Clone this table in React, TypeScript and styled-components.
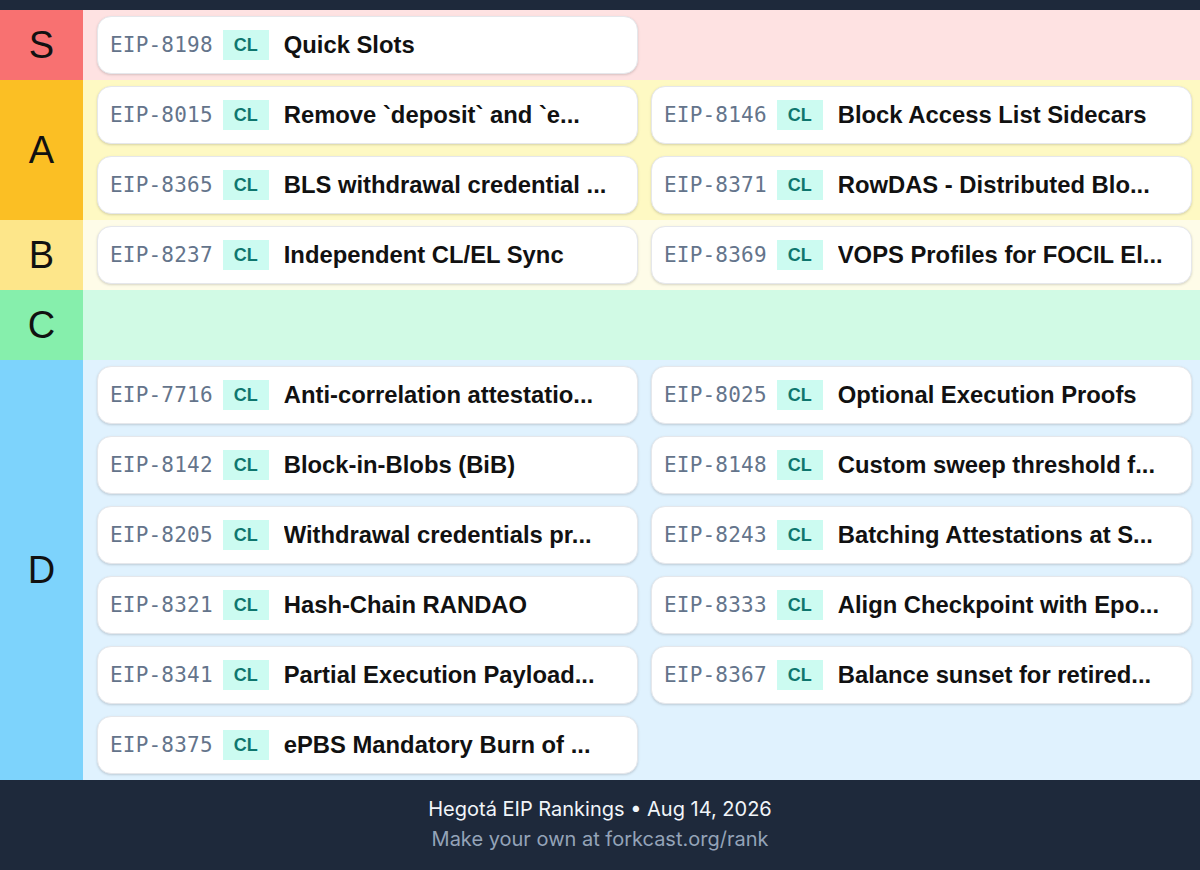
import React from "react";
import styled, { createGlobalStyle } from "styled-components";

const Global = createGlobalStyle`
  html, body { margin: 0; padding: 0; background: #1e293b; }
  body { font-family: Inter, "Liberation Sans", Arial, sans-serif; }
  * { box-sizing: border-box; }
`;

type Tier = { label: string; labelBg: string; rowBg: string; items: [string, string][] };

const tiers: Tier[] = [
  { label: "S", labelBg: "#f87171", rowBg: "#fee2e2", items: [["EIP-8198", "Quick Slots"]] },
  {
    label: "A", labelBg: "#fbbf24", rowBg: "#fef9c3",
    items: [
      ["EIP-8015", "Remove `deposit` and `e..."],
      ["EIP-8146", "Block Access List Sidecars"],
      ["EIP-8365", "BLS withdrawal credential ..."],
      ["EIP-8371", "RowDAS - Distributed Blo..."],
    ],
  },
  {
    label: "B", labelBg: "#fde68a", rowBg: "#fefce8",
    items: [
      ["EIP-8237", "Independent CL/EL Sync"],
      ["EIP-8369", "VOPS Profiles for FOCIL El..."],
    ],
  },
  { label: "C", labelBg: "#86efac", rowBg: "#d1fae5", items: [] },
  {
    label: "D", labelBg: "#7dd3fc", rowBg: "#e0f2fe",
    items: [
      ["EIP-7716", "Anti-correlation attestatio..."],
      ["EIP-8025", "Optional Execution Proofs"],
      ["EIP-8142", "Block-in-Blobs (BiB)"],
      ["EIP-8148", "Custom sweep threshold f..."],
      ["EIP-8205", "Withdrawal credentials pr..."],
      ["EIP-8243", "Batching Attestations at S..."],
      ["EIP-8321", "Hash-Chain RANDAO"],
      ["EIP-8333", "Align Checkpoint with Epo..."],
      ["EIP-8341", "Partial Execution Payload..."],
      ["EIP-8367", "Balance sunset for retired..."],
      ["EIP-8375", "ePBS Mandatory Burn of ..."],
    ],
  },
];

const Page = styled.div`
  width: 1200px;
  height: 870px;
  background: #1e293b;
  padding-top: 10px;
  display: flex;
  flex-direction: column;
`;

const Board = styled.div`
  display: flex;
  flex-direction: column;
`;

const Row = styled.div<{ $bg: string }>`
  display: flex;
  min-height: 70px;
  background: ${(p) => p.$bg};
`;

const Label = styled.div<{ $bg: string }>`
  width: 83px;
  flex: 0 0 83px;
  background: ${(p) => p.$bg};
  display: flex;
  align-items: center;
  justify-content: center;
  font-family: "Liberation Sans", Arial, sans-serif;
  font-size: 38px;
  font-weight: 400;
  color: #111;
`;

const Cards = styled.div`
  flex: 1;
  display: grid;
  grid-template-columns: 1fr 1fr;
  column-gap: 13px;
  row-gap: 12px;
  padding: 6px 8px 6px 14px;
  align-content: start;
`;

const Card = styled.div`
  height: 58px;
  background: #fff;
  border: 1px solid #e5e7eb;
  border-radius: 14px;
  box-shadow: 0 1px 3px rgba(0, 0, 0, 0.1), 0 1px 2px rgba(0, 0, 0, 0.06);
  display: flex;
  align-items: center;
  padding: 0 20px 0 12px;
  min-width: 0;
`;

const Num = styled.span`
  font-family: "DejaVu Sans Mono", "Liberation Mono", monospace;
  font-size: 21px;
  color: #64748b;
  letter-spacing: 0.2px;
  white-space: nowrap;
  flex: none;
`;

const Badge = styled.span`
  flex: none;
  margin-left: 10px;
  height: 30px;
  width: 46px;
  display: flex;
  align-items: center;
  justify-content: center;
  background: #ccfbf1;
  color: #0f766e;
  font-family: "Liberation Sans", Arial, sans-serif;
  font-weight: 700;
  font-size: 18px;
`;

const Title = styled.span`
  margin-left: 15px;
  font-family: "Liberation Sans", Arial, sans-serif;
  font-weight: 700;
  font-size: 23.8px;
  color: #111;
  white-space: nowrap;
  overflow: hidden;
  text-overflow: ellipsis;
  min-width: 0;
`;

const Footer = styled.div`
  flex: 1;
  display: flex;
  flex-direction: column;
  align-items: center;
  justify-content: center;
  gap: 4px;
  padding-bottom: 2px;
  font-family: Inter, "Liberation Sans", Arial, sans-serif;
  font-size: 20px;
  line-height: 26px;
`;

const FooterTitle = styled.div`
  color: #f1f5f9;
`;

const FooterSub = styled.div`
  color: #94a3b8;
`;

export default function App() {
  return (
    <Page>
      <Global />
      <Board>
        {tiers.map((t) => (
          <Row key={t.label} $bg={t.rowBg}>
            <Label $bg={t.labelBg}>{t.label}</Label>
            <Cards>
              {t.items.map(([num, title]) => (
                <Card key={num}>
                  <Num>{num}</Num>
                  <Badge>CL</Badge>
                  <Title>{title}</Title>
                </Card>
              ))}
            </Cards>
          </Row>
        ))}
      </Board>
      <Footer>
        <FooterTitle>Hegotá EIP Rankings • Aug 14, 2026</FooterTitle>
        <FooterSub>Make your own at forkcast.org/rank</FooterSub>
      </Footer>
    </Page>
  );
}
